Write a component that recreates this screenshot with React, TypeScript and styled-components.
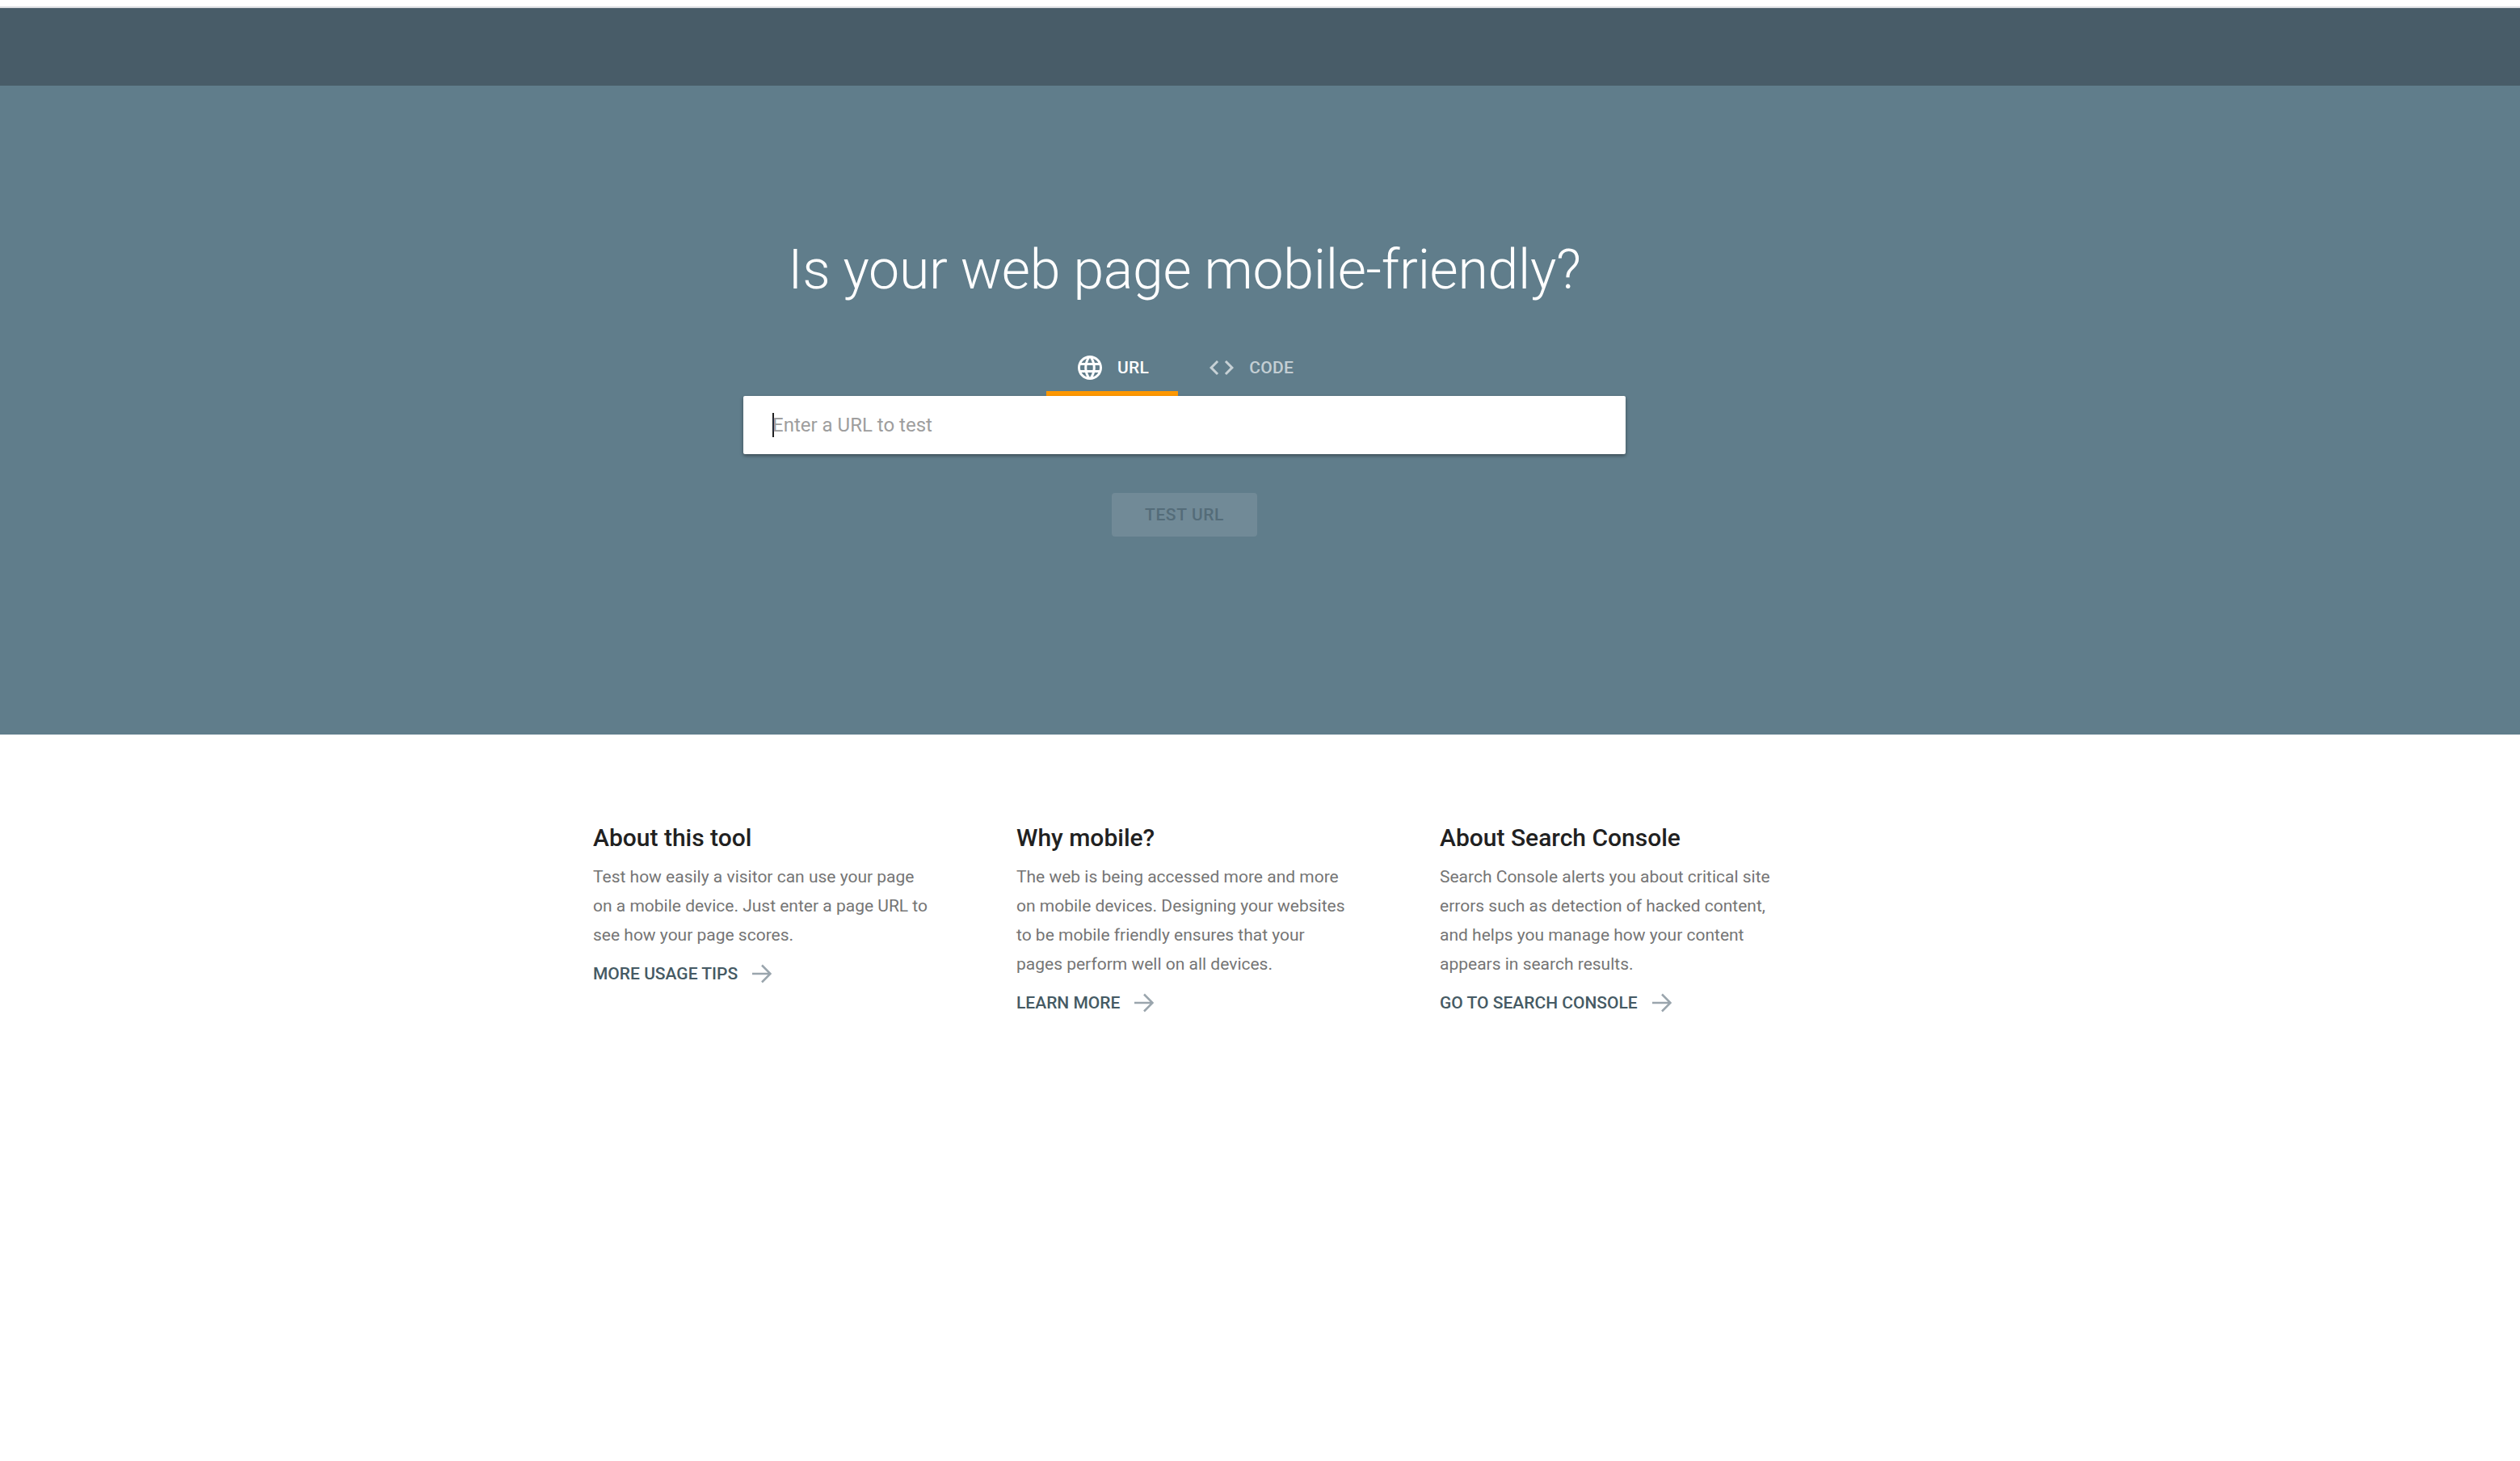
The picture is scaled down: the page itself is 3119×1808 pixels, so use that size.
import React from "react";
import styled, { createGlobalStyle } from "styled-components";

const Global = createGlobalStyle`
  html, body { margin: 0; padding: 0; background: #fff; }
  body { font-family: Roboto, "Liberation Sans", sans-serif; }
  * { box-sizing: border-box; }
`;

const Page = styled.div`
  min-height: 1808px;
  padding-top: 8px;
  background: #fff;
`;

const AppBar = styled.header`
  height: 98px;
  background: #485c68;
  border-top: 2px solid #dadce0;
`;

const Hero = styled.section`
  height: 803px;
  background: #607d8b;
  display: flex;
  flex-direction: column;
  align-items: center;
  padding-right: 187px;
`;

const Title = styled.h1`
  margin: 188px 0 0;
  height: 80px;
  font-size: 68px;
  line-height: 80px;
  font-weight: 300;
  letter-spacing: -0.3px;
  color: #fff;
  white-space: nowrap;
`;

const Tabs = styled.div`
  display: flex;
  margin-top: 56px;
  height: 60px;
`;

const Tab = styled.div<{ $active?: boolean }>`
  height: 60px;
  padding: 0 36px 4px;
  display: flex;
  align-items: center;
  gap: 16px;
  font-size: 21px;
  font-weight: 500;
  letter-spacing: 0.3px;
  color: ${(p) => (p.$active ? "#fff" : "rgba(255,255,255,0.65)")};
  border-bottom: 6px solid ${(p) => (p.$active ? "#ff9800" : "transparent")};
  svg { fill: currentColor; display: block; }
`;

const Field = styled.div`
  width: 1092px;
  height: 72px;
  background: #fff;
  border-radius: 2px;
  box-shadow: 0 2px 4px rgba(0, 0, 0, 0.4);
  display: flex;
  align-items: center;
  padding-left: 36px;
  font-size: 24px;
  color: #9e9e9e;
`;

const Caret = styled.span`
  width: 2px;
  height: 30px;
  background: #212121;
  margin-right: -2px;
`;

const TestButton = styled.div`
  margin-top: 48px;
  width: 180px;
  height: 54px;
  border-radius: 4px;
  background: #718a97;
  color: #546c79;
  font-size: 21px;
  font-weight: 500;
  letter-spacing: 0.6px;
  display: flex;
  align-items: center;
  justify-content: center;
`;

const Columns = styled.section`
  display: grid;
  grid-template-columns: repeat(3, 418px);
  column-gap: 106px;
  padding: 108px 0 0 734px;
`;

const Column = styled.article``;

const Heading = styled.h2`
  margin: 0;
  font-size: 30px;
  line-height: 40px;
  font-weight: 500;
  color: #212121;
`;

const Body = styled.p`
  margin: 10px 0 0;
  font-size: 21px;
  line-height: 36px;
  font-weight: 400;
  color: #757575;
`;

const More = styled.a`
  margin-top: 12px;
  display: flex;
  align-items: center;
  gap: 18px;
  height: 36px;
  font-size: 21px;
  font-weight: 500;
  color: #455a64;
  svg { display: block; }
`;

const GLOBE =
  "M11.99 2C6.47 2 2 6.48 2 12s4.47 10 9.99 10C17.52 22 22 17.52 22 12S17.52 2 11.99 2zm6.93 6h-2.95c-.32-1.25-.78-2.45-1.38-3.56 1.84.63 3.37 1.91 4.33 3.56zM12 4.04c.83 1.2 1.48 2.53 1.91 3.96h-3.82c.43-1.43 1.08-2.76 1.91-3.96zM4.26 14C4.1 13.36 4 12.69 4 12s.1-1.36.26-2h3.38c-.08.66-.14 1.32-.14 2 0 .68.06 1.34.14 2H4.26zm.82 2h2.95c.32 1.25.78 2.45 1.38 3.56-1.84-.63-3.37-1.9-4.33-3.56zm2.95-8H5.08c.96-1.66 2.49-2.93 4.33-3.56C8.81 5.55 8.35 6.75 8.03 8zM12 19.96c-.83-1.2-1.48-2.53-1.91-3.96h3.82c-.43 1.43-1.08 2.76-1.91 3.96zM14.34 14H9.66c-.09-.66-.16-1.32-.16-2 0-.68.07-1.35.16-2h4.68c.09.65.16 1.32.16 2 0 .68-.07 1.34-.16 2zm.25 5.56c.6-1.11 1.06-2.31 1.38-3.56h2.95c-.96 1.65-2.49 2.93-4.33 3.56zM16.36 14c.08-.66.14-1.32.14-2 0-.68-.06-1.34-.14-2h3.38c.16.64.26 1.31.26 2s-.1 1.36-.26 2h-3.38z";
const CODE =
  "M9.4 16.6L4.8 12l4.6-4.6L8 6l-6 6 6 6 1.4-1.4zm5.2 0l4.6-4.6-4.6-4.6L16 6l6 6-6 6-1.4-1.4z";

const Arrow = () => (
  <svg width="24" height="24" viewBox="0 0 24 24" fill="none" stroke="#9aa5ad" strokeWidth="2.5">
    <path d="M0 12h22.5M12 1.5L22.5 12 12 22.5" />
  </svg>
);

const columns = [
  {
    title: "About this tool",
    body: "Test how easily a visitor can use your page on a mobile device. Just enter a page URL to see how your page scores.",
    link: "MORE USAGE TIPS",
  },
  {
    title: "Why mobile?",
    body: "The web is being accessed more and more on mobile devices. Designing your websites to be mobile friendly ensures that your pages perform well on all devices.",
    link: "LEARN MORE",
  },
  {
    title: "About Search Console",
    body: "Search Console alerts you about critical site errors such as detection of hacked content, and helps you manage how your content appears in search results.",
    link: "GO TO SEARCH CONSOLE",
  },
];

export default function App() {
  return (
    <Page>
      <Global />
      <AppBar />
      <Hero>
        <Title>Is your web page mobile-friendly?</Title>
        <Tabs>
          <Tab $active>
            <svg width="36" height="36" viewBox="0 0 24 24"><path d={GLOBE} /></svg>
            URL
          </Tab>
          <Tab>
            <svg width="36" height="36" viewBox="0 0 24 24"><path d={CODE} /></svg>
            CODE
          </Tab>
        </Tabs>
        <Field>
          <Caret />
          Enter a URL to test
        </Field>
        <TestButton>TEST URL</TestButton>
      </Hero>
      <Columns>
        {columns.map((c) => (
          <Column key={c.title}>
            <Heading>{c.title}</Heading>
            <Body>{c.body}</Body>
            <More>
              {c.link}
              <Arrow />
            </More>
          </Column>
        ))}
      </Columns>
    </Page>
  );
}
